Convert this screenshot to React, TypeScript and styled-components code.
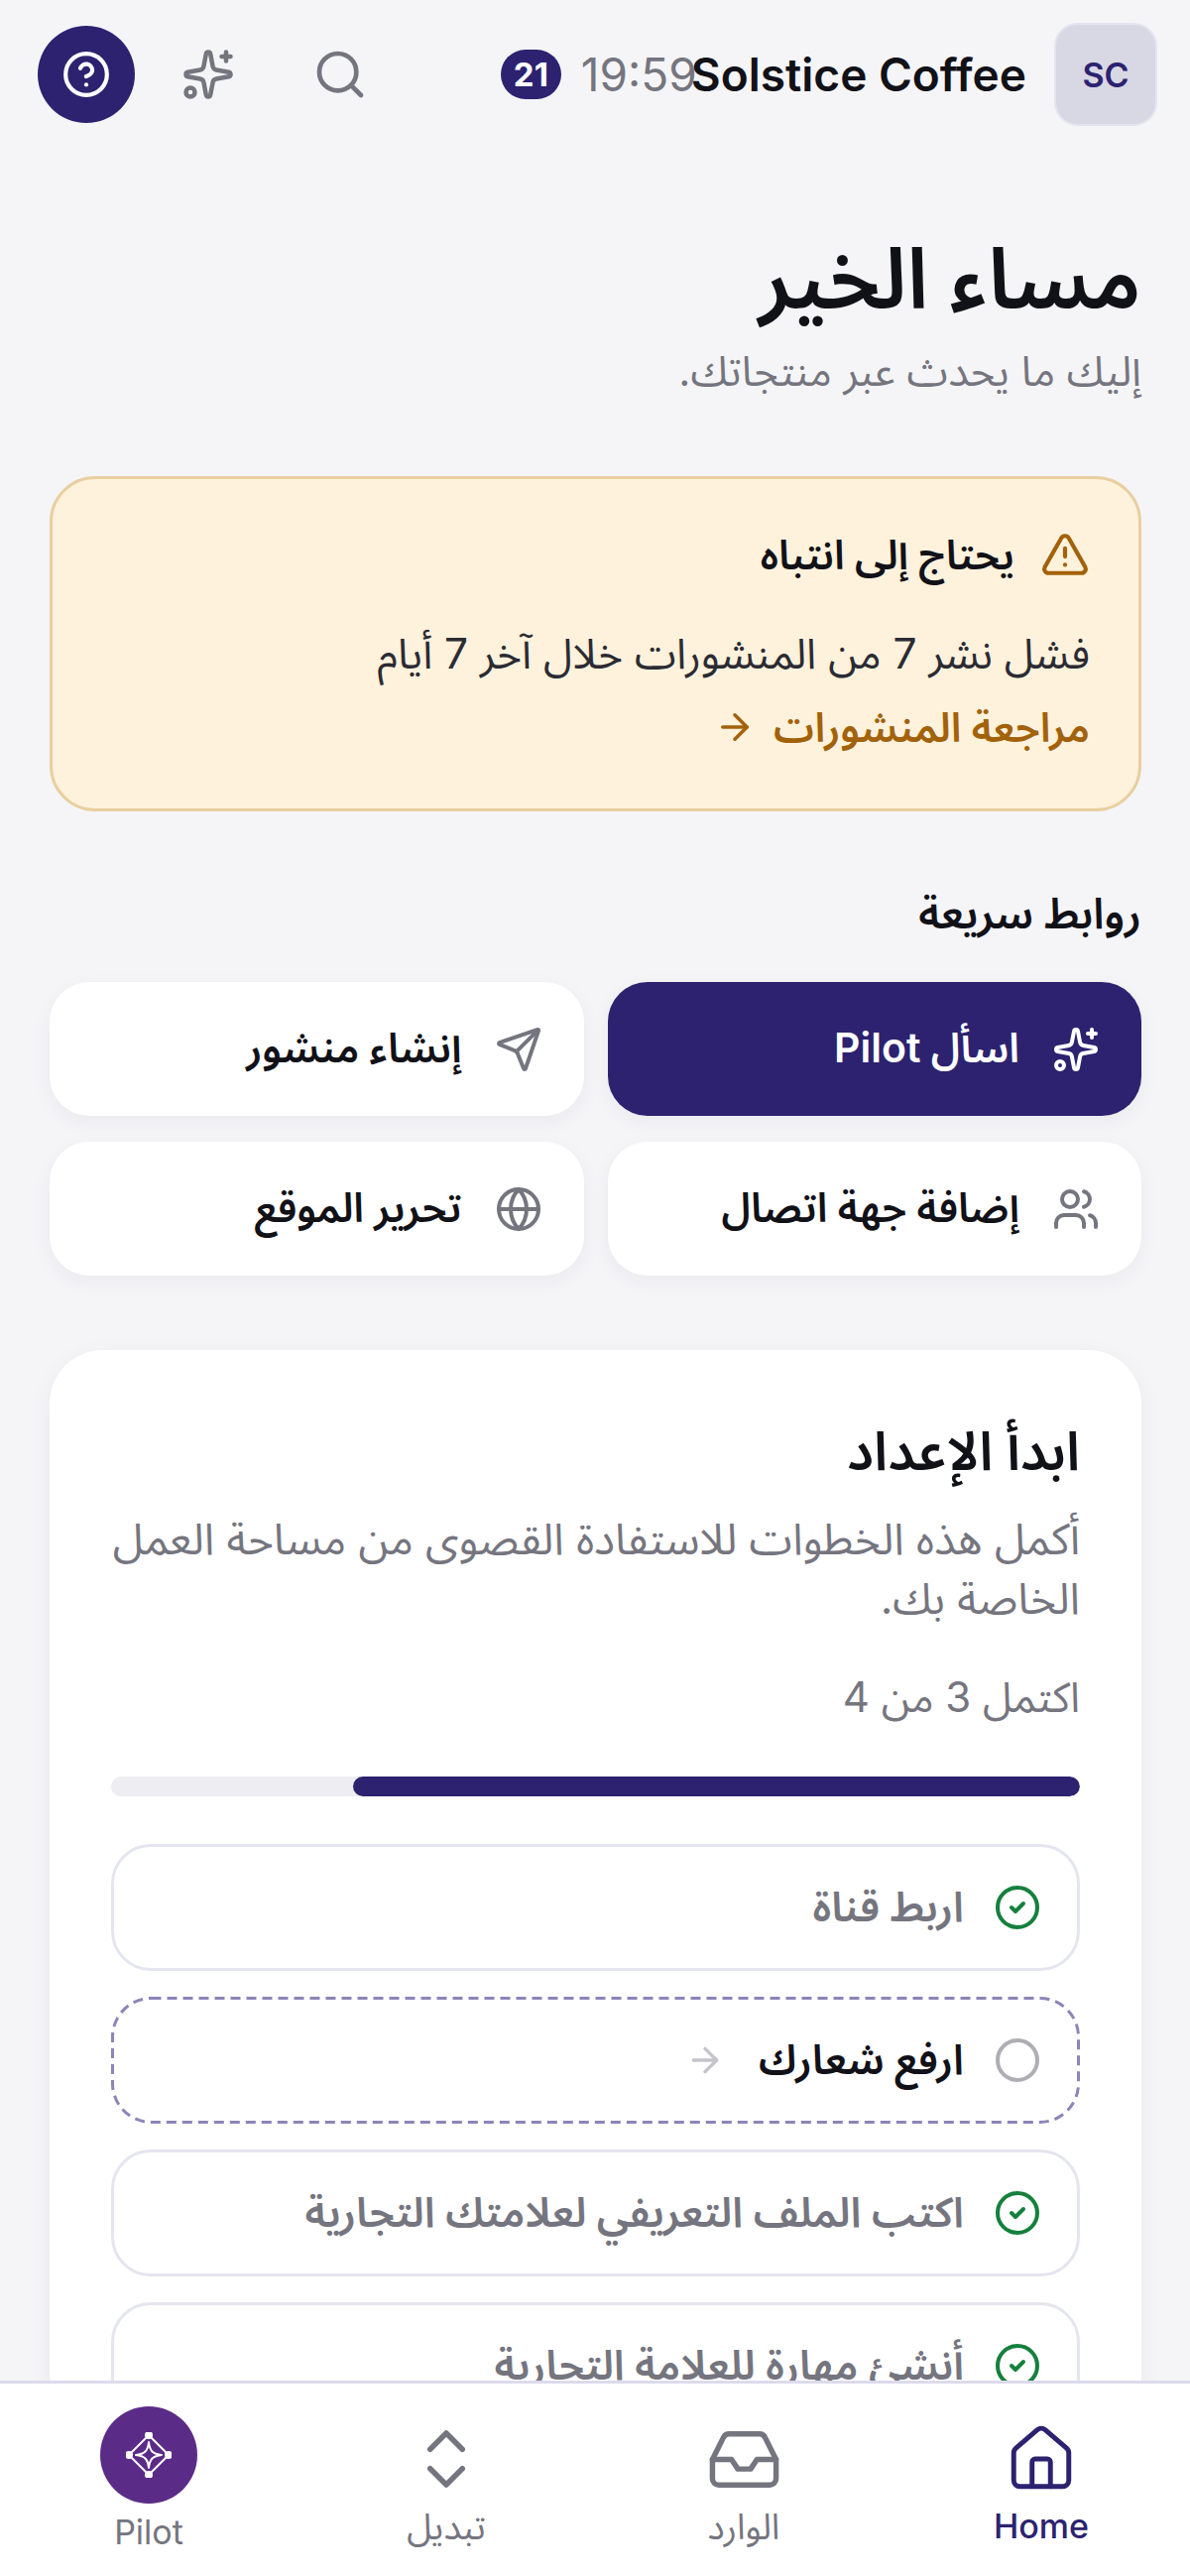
import React from 'react';
import styled, { createGlobalStyle } from 'styled-components';
import {
  ArrowRight,
  ChevronsUpDown,
  Circle,
  CircleCheck,
  CircleHelp,
  Globe,
  House,
  Inbox,
  Search,
  Send,
  Sparkles,
  TriangleAlert,
  Users,
} from 'lucide-react';

const navy = '#2c2270';
const ink = '#111118';
const muted = '#75757f';
const amber = '#a2620a';

const GlobalStyle = createGlobalStyle`
  html, body {
    margin: 0;
    padding: 0;
    background: #f5f5f8;
  }
  body {
    font-family: Inter, "Noto Sans Arabic", "DejaVu Sans", sans-serif;
    color: ${ink};
  }
  * {
    box-sizing: border-box;
  }
`;

const Screen = styled.div`
  display: flex;
  flex-direction: column;
  height: 2597px;
  overflow: hidden;
`;

const Header = styled.header`
  flex: none;
  display: flex;
  align-items: center;
  justify-content: space-between;
  height: 150px;
  padding: 0 33px 0 38px;
`;

const Brand = styled.div`
  display: flex;
  align-items: center;
`;

const Avatar = styled.div`
  width: 104px;
  height: 104px;
  border-radius: 24px;
  background: #d8d8e4;
  border: 2px solid #e4e4ee;
  color: ${navy};
  font-size: 34px;
  font-weight: 600;
  display: flex;
  align-items: center;
  justify-content: center;
`;

const BrandName = styled.span`
  margin-right: 28px;
  font-size: 46px;
  font-weight: 600;
  white-space: nowrap;
`;

const Clock = styled.span`
  margin-right: -6px;
  font-size: 46px;
  color: ${muted};
`;

const Badge = styled.span`
  margin-right: 20px;
  width: 61px;
  height: 50px;
  border-radius: 25px;
  background: ${navy};
  color: #fff;
  font-size: 33px;
  font-weight: 700;
  display: flex;
  align-items: center;
  justify-content: center;
`;

const Actions = styled.div`
  display: flex;
  align-items: center;
`;

const HelpButton = styled.div`
  width: 98px;
  height: 98px;
  border-radius: 50%;
  background: ${navy};
  color: #fff;
  display: flex;
  align-items: center;
  justify-content: center;
`;

const IconSlot = styled.div<{ $gap: number }>`
  margin-left: ${(p) => p.$gap}px;
  color: ${muted};
  display: flex;
`;

const Main = styled.main`
  flex: 1;
  min-height: 0;
  overflow: hidden;
  padding: 76px 49px 0 50px;
`;

const Title = styled.h1`
  margin: 0;
  font-size: 85px;
  line-height: 110px;
  font-weight: 600;
`;

const Subtitle = styled.p`
  margin: 8px 0 0;
  font-size: 42px;
  line-height: 60px;
  color: ${muted};
`;

const Alert = styled.section`
  margin-top: 76px;
  height: 338px;
  padding: 46px 49px;
  border: 3px solid #e9cf9f;
  border-radius: 46px;
  background: #fff2dc;
`;

const AlertHead = styled.div`
  display: flex;
  align-items: center;
  gap: 26px;
  color: ${amber};
  font-size: 41px;
  font-weight: 600;
  line-height: 60px;
`;

const AlertTitle = styled.span`
  color: ${ink};
`;

const AlertBody = styled.p`
  margin: 38px 0 0;
  font-size: 42.5px;
  line-height: 64px;
  color: #2b2b33;
`;

const AlertLink = styled.div`
  margin-top: 10px;
  display: flex;
  align-items: center;
  gap: 18px;
  font-size: 41px;
  line-height: 64px;
  font-weight: 600;
  color: ${amber};
`;

const SectionLabel = styled.h2`
  margin: 72px 0 0;
  font-size: 43px;
  line-height: 60px;
  font-weight: 600;
`;

const LinkGrid = styled.div`
  margin-top: 40px;
  display: grid;
  grid-template-columns: 1fr 1fr;
  gap: 26px 24px;
`;

const LinkButton = styled.div<{ $primary?: boolean }>`
  height: 135px;
  padding: 0 42px;
  border-radius: 40px;
  display: flex;
  align-items: center;
  gap: 33px;
  font-size: 41px;
  font-weight: 600;
  background: ${(p) => (p.$primary ? navy : '#fff')};
  color: ${(p) => (p.$primary ? '#fff' : ink)};
  box-shadow: 0 6px 20px rgba(30, 30, 60, 0.05);
  svg {
    color: ${(p) => (p.$primary ? '#fff' : muted)};
    flex: none;
  }
`;

const SetupCard = styled.section`
  margin-top: 75px;
  padding: 62px 62px 0;
  height: 1400px;
  border-radius: 54px;
  background: #fff;
  box-shadow: 0 6px 24px rgba(30, 30, 60, 0.05);
`;

const SetupTitle = styled.h3`
  margin: 0;
  font-size: 54px;
  line-height: 80px;
  font-weight: 600;
`;

const SetupText = styled.p`
  margin: 18px 0 0;
  font-size: 44px;
  line-height: 60px;
  color: ${muted};
`;

const Counter = styled.p`
  margin: 38px 0 0;
  font-size: 42px;
  line-height: 64px;
  color: ${muted};
`;

const Track = styled.div`
  margin-top: 48px;
  height: 20px;
  border-radius: 10px;
  background: #ededf2;
  overflow: hidden;
`;

const Fill = styled.div`
  height: 100%;
  border-radius: 10px;
  background: ${navy};
`;

const Steps = styled.div`
  margin-top: 48px;
  display: flex;
  flex-direction: column;
  gap: 26px;
`;

const Step = styled.div<{ $pending?: boolean }>`
  position: relative;
  height: 128px;
  padding: ${(p) => (p.$pending ? '0 39px' : '0 36px')};
  border-radius: 40px;
  border: ${(p) => (p.$pending ? 'none' : '3px solid #e5e5ef')};
  display: flex;
  align-items: center;
  gap: 30px;
  font-size: 42px;
  font-weight: 600;
  color: ${(p) => (p.$pending ? ink : muted)};
`;

const DashOutline = styled.svg`
  position: absolute;
  inset: 0;
  width: 100%;
  height: 100%;
  pointer-events: none;
  rect {
    fill: none;
    stroke: #8d84b8;
    stroke-width: 3;
    stroke-dasharray: 10 6;
  }
`;

const DoneIcon = styled(CircleCheck)`
  color: #15803d;
  flex: none;
`;

const TodoIcon = styled(Circle)`
  color: #aeaeb4;
  flex: none;
`;

const PendingArrow = styled(ArrowRight)`
  color: #c4c4ca;
  margin-right: 4px;
`;

const BottomNav = styled.nav`
  flex: none;
  height: 197px;
  background: #fff;
  border-top: 3px solid #dcdaec;
  display: grid;
  grid-template-columns: repeat(4, 1fr);
`;

const NavItem = styled.div<{ $active?: boolean; $size?: number }>`
  display: flex;
  flex-direction: column;
  align-items: center;
  padding-top: 40px;
  font-size: ${(p) => p.$size ?? 36}px;
  line-height: 48px;
  font-weight: ${(p) => (p.$active ? 500 : 400)};
  color: ${(p) => (p.$active ? navy : muted)};
`;

const NavIcon = styled.div`
  height: 72px;
  margin-bottom: 8px;
  display: flex;
  align-items: center;
  justify-content: center;
`;

const PilotItem = styled(NavItem)`
  padding-top: 23px;
`;

const PilotBubble = styled.div`
  width: 98px;
  height: 98px;
  border-radius: 50%;
  background: #5b2c87;
  color: #fff;
  margin-bottom: 5px;
  display: flex;
  align-items: center;
  justify-content: center;
`;

const PilotMark = () => (
  <svg width="46" height="46" viewBox="0 0 46 46" fill="none" stroke="currentColor" strokeWidth="2" strokeLinejoin="round">
    <path d="M23 3 L43 23 L23 43 L3 23 Z" />
    <path d="M23 10 C24 19 27 22 36 23 C27 24 24 27 23 36 C22 27 19 24 10 23 C19 22 22 19 23 10 Z" />
    <circle cx="23" cy="3" r="3" fill="currentColor" />
    <circle cx="43" cy="23" r="3" fill="currentColor" />
    <circle cx="23" cy="43" r="3" fill="currentColor" />
    <circle cx="3" cy="23" r="3" fill="currentColor" />
  </svg>
);

const steps = [
  { label: 'اربط قناة', done: true },
  { label: 'ارفع شعارك', done: false },
  { label: 'اكتب الملف التعريفي لعلامتك التجارية', done: true },
  { label: 'أنشئ مهارة للعلامة التجارية', done: true },
];

export default function App() {
  return (
    <Screen>
      <GlobalStyle />
      <Header dir="rtl">
        <Brand>
          <Avatar>SC</Avatar>
          <BrandName>Solstice Coffee</BrandName>
          <Clock>19:59</Clock>
          <Badge>21</Badge>
        </Brand>
        <Actions dir="ltr">
          <HelpButton>
            <CircleHelp size={50} strokeWidth={2} />
          </HelpButton>
          <IconSlot $gap={47}>
            <Sparkles size={54} strokeWidth={2} />
          </IconSlot>
          <IconSlot $gap={78}>
            <Search size={56} strokeWidth={2} />
          </IconSlot>
        </Actions>
      </Header>
      <Main dir="rtl">
        <Title>مساء الخير</Title>
        <Subtitle>إليك ما يحدث عبر منتجاتك.</Subtitle>
        <Alert>
          <AlertHead>
            <TriangleAlert size={50} strokeWidth={2} />
            <AlertTitle>يحتاج إلى انتباه</AlertTitle>
          </AlertHead>
          <AlertBody>فشل نشر 7 من المنشورات خلال آخر 7 أيام</AlertBody>
          <AlertLink>
            مراجعة المنشورات
            <ArrowRight size={42} strokeWidth={2} />
          </AlertLink>
        </Alert>
        <SectionLabel>روابط سريعة</SectionLabel>
        <LinkGrid>
          <LinkButton $primary>
            <Sparkles size={48} strokeWidth={2} />
            اسأل Pilot
          </LinkButton>
          <LinkButton>
            <Send size={48} strokeWidth={2} />
            إنشاء منشور
          </LinkButton>
          <LinkButton>
            <Users size={48} strokeWidth={2} />
            إضافة جهة اتصال
          </LinkButton>
          <LinkButton>
            <Globe size={48} strokeWidth={2} />
            تحرير الموقع
          </LinkButton>
        </LinkGrid>
        <SetupCard>
          <SetupTitle>ابدأ الإعداد</SetupTitle>
          <SetupText>أكمل هذه الخطوات للاستفادة القصوى من مساحة العمل الخاصة بك.</SetupText>
          <Counter>اكتمل 3 من 4</Counter>
          <Track>
            <Fill style={{ width: `${(3 / 4) * 100}%` }} />
          </Track>
          <Steps>
            {steps.map((step) => (
              <Step key={step.label} $pending={!step.done}>
                {step.done ? <DoneIcon size={48} strokeWidth={2} /> : <TodoIcon size={48} strokeWidth={2} />}
                {step.label}
                {!step.done && <PendingArrow size={40} strokeWidth={2} />}
                {!step.done && (
                  <DashOutline>
                    <rect x="1.5" y="1.5" width="974" height="125" rx="39" />
                  </DashOutline>
                )}
              </Step>
            ))}
          </Steps>
        </SetupCard>
      </Main>
      <BottomNav dir="rtl">
        <NavItem $active $size={34}>
          <NavIcon>
            <House size={74} strokeWidth={1.6} />
          </NavIcon>
          Home
        </NavItem>
        <NavItem>
          <NavIcon>
            <Inbox size={77} strokeWidth={1.7} />
          </NavIcon>
          الوارد
        </NavItem>
        <NavItem>
          <NavIcon>
            <ChevronsUpDown size={78} strokeWidth={1.7} />
          </NavIcon>
          تبديل
        </NavItem>
        <PilotItem $size={34}>
          <PilotBubble>
            <PilotMark />
          </PilotBubble>
          Pilot
        </PilotItem>
      </BottomNav>
    </Screen>
  );
}
